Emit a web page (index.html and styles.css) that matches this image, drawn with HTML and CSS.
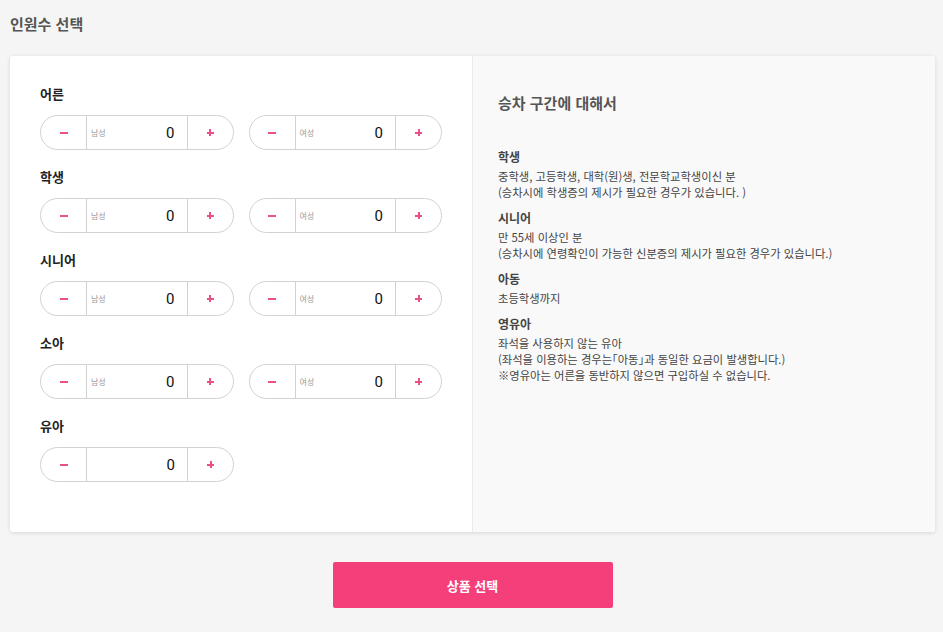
FILE: index.html
```html
<!doctype html>
<html lang="ko">
<head>
    <meta charset="UTF-8">
    <meta name="viewport" content="width=device-width, initial-scale=1.0">
    <title>인원수 선택</title>
    <link rel="stylesheet" href="styles.css">
</head>
<body>
    <h2 class="page-title">인원수 선택</h2>
    <div class="card">
        <div class="counters">
            <div class="group">
                <div class="group-label">어른</div>
                <div class="group-row">
                    <div class="counter"><button class="step minus" aria-label="빼기"></button><div class="value"><span class="sex">남성</span><span class="num">0</span></div><button class="step plus" aria-label="더하기"></button></div>
                    <div class="counter"><button class="step minus" aria-label="빼기"></button><div class="value"><span class="sex">여성</span><span class="num">0</span></div><button class="step plus" aria-label="더하기"></button></div>
                </div>
            </div>
            <div class="group">
                <div class="group-label">학생</div>
                <div class="group-row">
                    <div class="counter"><button class="step minus" aria-label="빼기"></button><div class="value"><span class="sex">남성</span><span class="num">0</span></div><button class="step plus" aria-label="더하기"></button></div>
                    <div class="counter"><button class="step minus" aria-label="빼기"></button><div class="value"><span class="sex">여성</span><span class="num">0</span></div><button class="step plus" aria-label="더하기"></button></div>
                </div>
            </div>
            <div class="group">
                <div class="group-label">시니어</div>
                <div class="group-row">
                    <div class="counter"><button class="step minus" aria-label="빼기"></button><div class="value"><span class="sex">남성</span><span class="num">0</span></div><button class="step plus" aria-label="더하기"></button></div>
                    <div class="counter"><button class="step minus" aria-label="빼기"></button><div class="value"><span class="sex">여성</span><span class="num">0</span></div><button class="step plus" aria-label="더하기"></button></div>
                </div>
            </div>
            <div class="group">
                <div class="group-label">소아</div>
                <div class="group-row">
                    <div class="counter"><button class="step minus" aria-label="빼기"></button><div class="value"><span class="sex">남성</span><span class="num">0</span></div><button class="step plus" aria-label="더하기"></button></div>
                    <div class="counter"><button class="step minus" aria-label="빼기"></button><div class="value"><span class="sex">여성</span><span class="num">0</span></div><button class="step plus" aria-label="더하기"></button></div>
                </div>
            </div>
            <div class="group">
                <div class="group-label">유아</div>
                <div class="group-row">
                    <div class="counter"><button class="step minus" aria-label="빼기"></button><div class="value"><span class="num">0</span></div><button class="step plus" aria-label="더하기"></button></div>
                </div>
            </div>
        </div>
        <div class="info">
            <h3 class="info-title">승차 구간에 대해서</h3>
            <dl class="info-list">
                <dt>학생</dt>
                <dd>중학생, 고등학생, 대학(원)생, 전문학교학생이신 분<br>(승차시에 학생증의 제시가 필요한 경우가 있습니다. )</dd>
                <dt>시니어</dt>
                <dd>만 55세 이상인 분<br>(승차시에 연령확인이 가능한 신분증의 제시가 필요한 경우가 있습니다.)</dd>
                <dt>아동</dt>
                <dd>초등학생까지</dd>
                <dt>영유아</dt>
                <dd>좌석을 사용하지 않는 유아<br>(좌석을 이용하는 경우는｢아동｣과 동일한 요금이 발생합니다.)<br>※영유아는 어른을 동반하지 않으면 구입하실 수 없습니다.</dd>
            </dl>
        </div>
    </div>
    <div class="actions">
        <button class="submit">상품 선택</button>
    </div>
</body>
</html>
```

FILE: styles.css
```css
body {
    margin: 0;
    padding: 0 8px 0 10px;
    background-color: #f5f5f5;
    font-family: "Noto Sans CJK KR", "Noto Sans", sans-serif;
    color: #333;
}

.page-title {
    margin: 0;
    padding-top: 13px;
    height: 56px;
    box-sizing: border-box;
    font-size: 15px;
    line-height: 22px;
    font-weight: bold;
    color: #555;
}

.card {
    display: flex;
    background-color: #fff;
    border-radius: 3px;
    box-shadow: 0 1px 4px rgba(0, 0, 0, 0.13);
    overflow: hidden;
}

.counters {
    width: 463px;
    box-sizing: border-box;
    padding: 29px 30px 32px 30px;
    border-right: 1px solid #eaeaea;
}

.group {
    margin-bottom: 18px;
}

.group-label {
    font-size: 13px;
    line-height: 18px;
    font-weight: bold;
    color: #222;
    margin-bottom: 12px;
}

.group-row {
    display: flex;
    gap: 15px;
}

.counter {
    display: flex;
    width: 194px;
    height: 35px;
    box-sizing: border-box;
    border: 1px solid #d2d2d2;
    border-radius: 18px;
    overflow: hidden;
}

.step {
    position: relative;
    width: 45px;
    border: none;
    background: none;
    padding: 0;
}

/* minus / plus drawn as bars */
.step::before,
.plus::after {
    content: "";
    position: absolute;
    left: 50%;
    top: 50%;
    background-color: #e9508a;
}

.step::before {
    width: 8px;
    height: 2px;
    margin: -1px 0 0 -4px;
}

.plus::before {
    width: 7px;
    margin-left: -3.5px;
}

.plus::after {
    width: 2px;
    height: 7px;
    margin: -3.5px 0 0 -1px;
}

.value {
    flex: 1;
    display: flex;
    align-items: center;
    justify-content: space-between;
    border-left: 1px solid #d2d2d2;
    border-right: 1px solid #d2d2d2;
    padding: 0 12px 0 4px;
}

.value .sex {
    font-size: 8px;
    color: #999;
}

.value .num {
    margin-left: auto;
    font-family: "Roboto", sans-serif;
    font-size: 15px;
    color: #111;
}

.info {
    flex: 1;
    background-color: #f9f9f9;
    padding: 37px 25px 30px 25px;
}

.info-title {
    margin: 0 0 35px 0;
    font-size: 15px;
    line-height: 20px;
    font-weight: bold;
    color: #555;
}

.info-list {
    margin: 0;
}

.info-list dt {
    font-size: 12px;
    line-height: 18px;
    font-weight: bold;
    color: #444;
    margin-bottom: 2px;
}

.info-list dd {
    margin: 0 0 9px 0;
    font-size: 11.3px;
    line-height: 16px;
    color: #444;
}

.actions {
    display: flex;
    justify-content: center;
    padding-top: 30px;
}

.submit {
    width: 280px;
    height: 46px;
    border: none;
    border-radius: 2px;
    background-color: #f43f7b;
    color: #fff;
    font-family: "Noto Sans CJK KR", sans-serif;
    font-size: 13px;
    font-weight: bold;
}
```
